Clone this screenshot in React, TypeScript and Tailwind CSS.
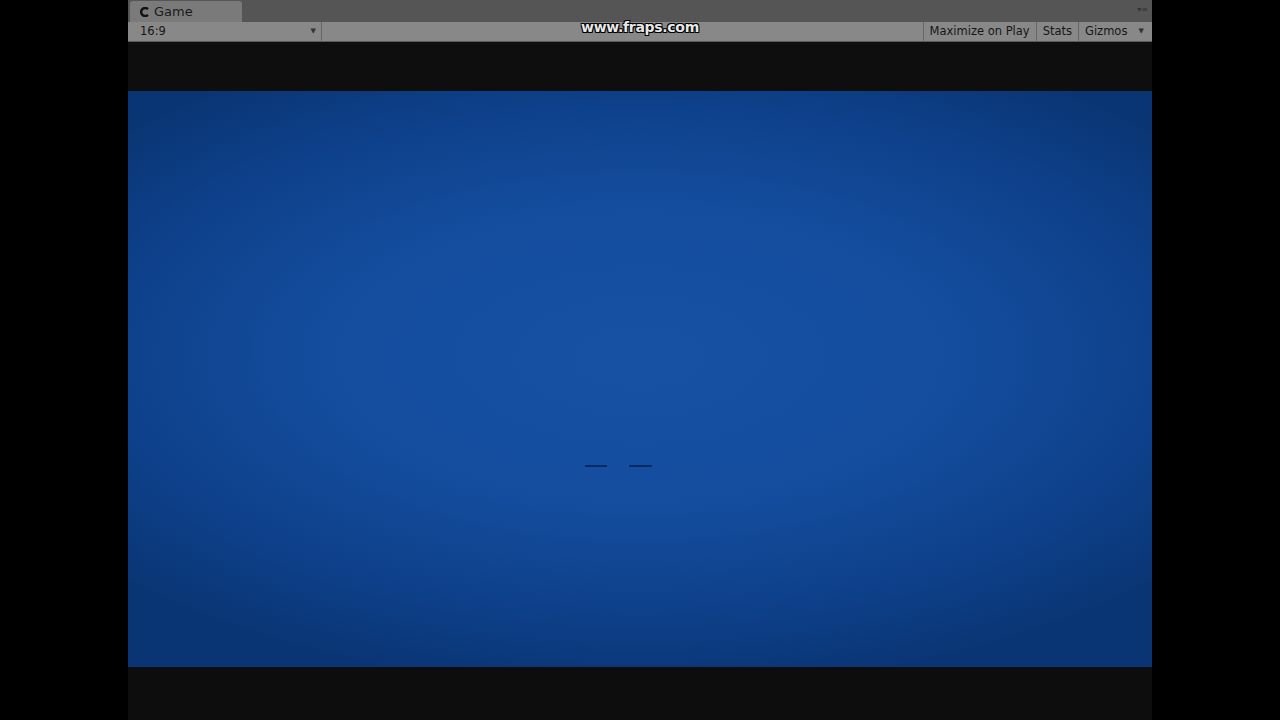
export default function App() {
  return (
    <div className="w-[1280px] h-[720px] bg-black flex justify-center overflow-hidden" style={{ fontFamily: '"DejaVu Sans", Verdana, sans-serif' }}>
      <div className="relative w-[1024px] h-full flex flex-col bg-[#0d0d0d]">
        {/* tab strip */}
        <div className="h-[22px] bg-[#555555] flex items-end pl-[2px] pr-[4px] shrink-0">
          <div className="w-[112px] h-[21px] bg-[#7a7a7a] rounded-t-[3px] flex items-center gap-[4px] pl-[10px] text-[13px] text-[#1a1a1a]">
            <svg width="10" height="10" viewBox="0 0 10 10">
              <path d="M8 2.2 A4 4 0 1 0 8 7.8" stroke="#111" strokeWidth="2.4" fill="none" />
            </svg>
            <span className="leading-none">Game</span>
          </div>
          <div className="flex-1" />
          <div className="self-center text-[8px] text-[#333] leading-none pb-[2px]">▾≡</div>
        </div>
        {/* toolbar */}
        <div className="h-[20px] bg-[#888888] flex items-stretch text-[11.5px] text-[#161616] shrink-0 border-b border-[#5a5a5a]">
          <div className="w-[194px] flex items-center justify-between pl-[12px] pr-[5px] border-r border-[#666]">
            <span>16:9</span>
            <span className="text-[7px] text-[#333]">▼</span>
          </div>
          <div className="flex-1" />
          <div className="flex items-center px-[6px] border-l border-[#666]">Maximize on Play</div>
          <div className="flex items-center px-[6px] border-l border-[#666]">Stats</div>
          <div className="w-[74px] flex items-center justify-between pl-[6px] pr-[8px] border-l border-[#666]">
            <span>Gizmos</span>
            <span className="text-[7px] text-[#333]">▼</span>
          </div>
        </div>
        {/* fraps watermark */}
        <div className="absolute left-0 right-0 top-[17px] flex justify-center pointer-events-none">
          <span
            className="font-bold text-[14px] text-[#e8e8e8] tracking-[-0.3px]"
            style={{ textShadow: '1px 1px 0 #000, -1px -1px 0 #000, 1px -1px 0 #000, -1px 1px 0 #000' }}
          >
            www.fraps.com
          </span>
        </div>
        {/* letterbox top */}
        <div className="h-[49px] bg-[#0e0e0e] shrink-0" />
        {/* game view */}
        <div className="h-[576px] shrink-0 flex items-center justify-center bg-[radial-gradient(ellipse_68%_58%_at_50%_46%,#1651a4_0%,#144d9e_45%,#0e418b_75%,#0a3575_100%)]">
          <div className="flex gap-[22px] mt-[174px] ml-[-44px]">
            <div className="w-[22px] h-[2px] bg-[#0b2a5e]" />
            <div className="w-[23px] h-[2px] bg-[#0b2a5e]" />
          </div>
        </div>
        {/* letterbox bottom */}
        <div className="flex-1 bg-[#0d0d0d]" />
      </div>
    </div>
  );
}
